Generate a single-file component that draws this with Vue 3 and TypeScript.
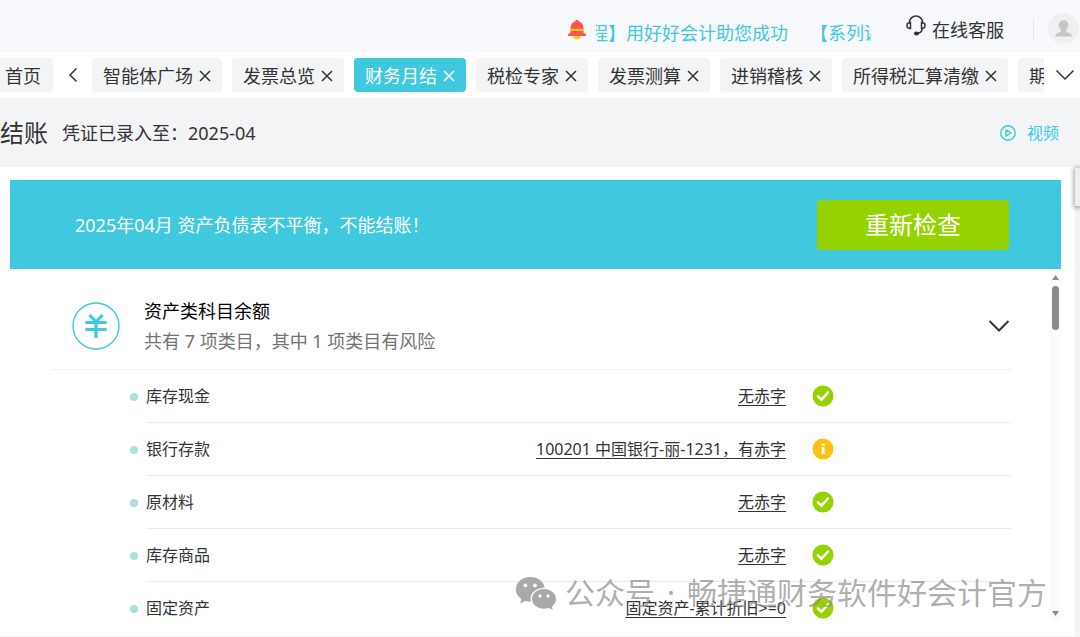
<script setup lang="ts">
import { ref } from 'vue'

interface Tab { name: string }
interface CheckItem { name: string; result: string; ok: boolean }

const tabs: Tab[] = [
  { name: '智能体广场' },
  { name: '发票总览' },
  { name: '财务月结' },
  { name: '税检专家' },
  { name: '发票测算' },
  { name: '进销稽核' },
  { name: '所得税汇算清缴' },
  { name: '期末结转' },
]
const active = ref('财务月结')

const items: CheckItem[] = [
  { name: '库存现金', result: '无赤字', ok: true },
  { name: '银行存款', result: '100201 中国银行-丽-1231，有赤字', ok: false },
  { name: '原材料', result: '无赤字', ok: true },
  { name: '库存商品', result: '无赤字', ok: true },
  { name: '固定资产', result: '固定资产-累计折旧>=0', ok: true },
]
</script>

<template>
  <div class="page">
    <header class="topbar">
      <svg class="bell" viewBox="0 0 20 22" aria-hidden="true">
        <path d="M6.5 17h7a3.5 3.5 0 0 1-7 0z" fill="#ffcc0c" />
        <path d="M10 1c1.1 0 1.7.6 1.9 1.5C15 3.3 16.5 6 16.5 9v4.5l2.500 2c.5.5.3 1.500-.6 1.500H1.600C.7 17 .5 16 1 15.500l2.500-2V9c0-3 1.500-5.700 4.600-6.500C8.300 1.600 8.900 1 10 1z" fill="#ff544f" />
        <path d="M3.5 9.8h13V12h-13z" fill="#ffcc0c" />
      </svg>
      <div class="ticker">
        <a href="#">程】用好好会计助您成功</a>
        <a href="#">【系列课程】</a>
      </div>
      <a href="#" class="service">
        <svg viewBox="0 0 20 21" aria-hidden="true" fill="none" stroke="#333" stroke-width="1.5" stroke-linecap="round">
          <path d="M3.5 8V7.5a6.500 6.500 0 0 1 13 0V8" />
          <path d="M4.5 7.5v6c-2.200 0-3.500-1.100-3.500-3s1.300-3 3.500-3zM15.500 7.500v6c2.200 0 3.500-1.100 3.500-3s-1.300-3-3.500-3z" />
          <path d="M16 13.5c0 2.500-1.300 4.300-4 4.700" />
          <ellipse cx="10.5" cy="18.5" rx="1.8" ry="1.2" fill="#333" />
        </svg>
        <span>在线客服</span>
      </a>
      <span class="split"></span>
      <button class="avatar" aria-label="用户">
        <svg viewBox="0 0 32 32" aria-hidden="true">
          <circle cx="16" cy="16" r="16" fill="#f0f0f0" />
          <path d="M16 7.5c3 0 5 2.100 5 5 0 2-.9 3.800-2.300 4.800v1.400c0 .6.400 1 1 1.200 3.200.9 4.800 1.800 4.800 4.300H7.500c0-2.500 1.600-3.400 4.800-4.300.6-.2 1-.6 1-1.200v-1.400C11.900 16.300 11 14.500 11 12.500c0-2.900 2-5 5-5z" fill="#c6c6c6" />
        </svg>
      </button>
    </header>

    <nav class="tabbar">
      <button class="tab home">首页</button>
      <button class="prev" aria-label="向左">
        <svg viewBox="0 0 10 16" aria-hidden="true"><path d="M8.5 1.500L2 8l6.500 6.500" /></svg>
      </button>
      <div class="tabs">
        <button v-for="t in tabs" :key="t.name" class="tab" :class="{ on: t.name === active }" @click="active = t.name">
          <span>{{ t.name }}</span>
          <svg viewBox="0 0 12 12" aria-hidden="true"><path d="M1 1l10 10M11 1L1 11" /></svg>
        </button>
      </div>
      <button class="more" aria-label="更多">
        <svg viewBox="0 0 20 12" aria-hidden="true"><path d="M1.5 1.500L10 10l8.500-8.500" /></svg>
      </button>
    </nav>

    <section class="heading">
      <h1>结账</h1>
      <span class="until">凭证已录入至：2025-04</span>
      <a href="#" class="video">
        <svg viewBox="0 0 16 16" aria-hidden="true" fill="none" stroke="#40c8de" stroke-width="1.4" stroke-linejoin="round">
          <circle cx="8" cy="8" r="7.2" />
          <path d="M6 4.800v6.400L11 8z" />
        </svg>
        <span>视频</span>
      </a>
    </section>

    <main class="panel">
      <div class="banner">
        <p>2025年04月 资产负债表不平衡，不能结账！</p>
        <button class="recheck">重新检查</button>
      </div>
      <div class="scroller">
        <div class="content">
          <div class="group">
            <svg class="coin" viewBox="0 0 48 48" aria-hidden="true" fill="none" stroke="#40c8de">
              <circle cx="24" cy="24" r="23" stroke-width="1.4" />
              <path d="M17.5 13l6.500 7 6.500-7M13.500 20.500h21M13.500 27.500h21M24 20v16" stroke-width="3.2" />
            </svg>
            <div class="summary">
              <h2>资产类科目余额</h2>
              <p>共有 7 项类目，其中 1 项类目有风险</p>
            </div>
            <button class="fold" aria-label="收起">
              <svg viewBox="0 0 22 14" aria-hidden="true"><path d="M1.5 2L11 11.500 20.500 2" /></svg>
            </button>
          </div>
          <ul class="items">
            <li v-for="item in items" :key="item.name">
              <i class="dot"></i>
              <div class="row">
                <span>{{ item.name }}</span>
                <a href="#">{{ item.result }}</a>
                <svg v-if="item.ok" viewBox="0 0 22 22" aria-hidden="true">
                  <circle cx="11" cy="11" r="10.5" fill="#94d300" />
                  <path d="M6 11.500l3.500 3.200L16 7.500" fill="none" stroke="#fff" stroke-width="2.6" stroke-linecap="round" />
                </svg>
                <svg v-else viewBox="0 0 22 22" aria-hidden="true">
                  <circle cx="11" cy="11" r="10.5" fill="#ffc013" />
                  <path d="M9.700 5.500h2.800v2.300H9.700zM9.300 9.300h3.200V15h.5v1.300H9.300V15h.5v-4.400h-.5z" fill="#fff" />
                </svg>
              </div>
            </li>
          </ul>
        </div>
        <div class="track" aria-hidden="true">
          <svg viewBox="0 0 7 5"><path d="M3.5 0L7 5H0z" fill="#8b8b8b" /></svg>
          <i class="thumb"></i>
          <svg viewBox="0 0 7 5"><path d="M3.5 5L7 0H0z" fill="#8b8b8b" /></svg>
        </div>
      </div>
    </main>

    <div class="drawer"></div>

    <div class="watermark">
      <svg viewBox="0 0 42 34" aria-hidden="true">
        <path fill-rule="evenodd" fill="#a9a9a9" d="M15 1c8 0 14 4.700 14.600 10.800C21.500 11.600 15.500 17 15.500 23c0 1 .1 1.800.4 2.700-2 .1-3.800-.2-5.600-.7L5 27.500l1.400-4.600C2.800 20.500.8 17.300.8 13.500.8 6.500 7 1 15 1zM10.300 7.500a1.900 1.900 0 1 0 0 3.800 1.900 1.900 0 0 0 0-3.800zm9.700 0a1.900 1.900 0 1 0 0 3.800 1.900 1.900 0 0 0 0-3.800z" />
        <path fill-rule="evenodd" fill="#a9a9a9" d="M29 13c6.700 0 12 4.400 12 10 0 3-1.600 5.700-4.200 7.500l1.100 3.300-4.200-1.900c-1.500.5-3 .8-4.700.8-6.700 0-12-4.200-12-9.700s5.300-10 12-10zM25 18.300a1.600 1.600 0 1 0 0 3.200 1.600 1.600 0 0 0 0-3.200zm8 0a1.600 1.600 0 1 0 0 3.200 1.600 1.600 0 0 0 0-3.200z" />
      </svg>
      <span>公众号</span>
      <span class="mid">·</span>
      <span>畅捷通财务软件好会计官方</span>
    </div>
  </div>
</template>

<style>
html,
body {
  height: 100%;
  overflow: hidden;
}
#app {
  height: 100%;
}
</style>

<style scoped>
.page {
  position: relative;
  min-height: 100%;
  background: #f3f4f6;
  color: #333;
  font: 18px/24px "Noto Sans", "Noto Sans CJK SC", sans-serif;
}
.page * {
  box-sizing: border-box;
}
button {
  font: inherit;
  color: inherit;
  border: 0;
  padding: 0;
  background: none;
  cursor: pointer;
}
a {
  color: inherit;
  text-decoration: none;
}
h1,
h2,
p,
ul {
  margin: 0;
  padding: 0;
  font-weight: 400;
}
svg {
  display: block;
  flex: none;
}

.topbar {
  display: flex;
  justify-content: flex-end;
  align-items: center;
  height: 52px;
  padding: 4px 1px 0 0;
  background: #f8f9fd;
}
.bell {
  width: 20px;
  height: 22px;
  margin: 4px 9px 0 0;
}
.ticker {
  display: flex;
  gap: 22px;
  width: 275px;
  padding-top: 10px;
  overflow: hidden;
  white-space: nowrap;
  color: #40c8de;
}
.ticker a:first-child {
  margin-left: -6px;
}
.service {
  display: flex;
  align-items: center;
  gap: 6px;
  margin-left: 35px;
  padding-top: 4px;
}
.service svg {
  width: 20px;
  height: 21px;
  margin-bottom: 10px;
}
.split {
  width: 1px;
  height: 21px;
  margin: 0 14px 0 29px;
  background: #e6e7ea;
}
.avatar svg {
  width: 31px;
  height: 31px;
}

.tabbar {
  display: flex;
  align-items: center;
  height: 47px;
  background: #fff;
  border-bottom: 1px solid #f0f1f3;
}
.tab {
  display: flex;
  flex: none;
  align-items: center;
  gap: 6px;
  height: 34px;
  padding: 1px 11px 0;
  border-radius: 4px;
  background: #f3f4f6;
  white-space: nowrap;
}
.tab svg {
  width: 12px;
  height: 12px;
}
.tab path,
.prev path,
.more path,
.fold path {
  fill: none;
  stroke: #333;
  stroke-width: 1.5;
}
.tab.on {
  background: #40c8de;
  color: #fff;
}
.tab.on path {
  stroke: #fff;
}
.home {
  padding: 1px 12px 0 5px;
  border-radius: 0 4px 4px 0;
}
.prev {
  display: flex;
  justify-content: center;
  width: 39px;
}
.prev svg {
  width: 10px;
  height: 16px;
}
.tabs {
  display: flex;
  flex: 1;
  gap: 10px;
  min-width: 0;
  overflow: hidden;
}
.more {
  display: flex;
  justify-content: center;
  width: 36px;
  padding-left: 6px;
}
.more svg {
  width: 20px;
  height: 12px;
}

.heading {
  display: flex;
  align-items: center;
  height: 68px;
  padding-right: 21px;
}
.heading h1 {
  font-size: 24px;
  line-height: 32px;
}
.until {
  flex: 1;
  margin-left: 14px;
}
.video {
  display: flex;
  align-items: center;
  gap: 11px;
  font-size: 16px;
  color: #40c8de;
}
.video svg {
  width: 16px;
  height: 16px;
}

.panel {
  margin-right: 5px;
  padding: 13px 14px 14px 10px;
  background: #fff;
}
.banner {
  display: flex;
  justify-content: space-between;
  align-items: center;
  height: 89px;
  padding: 0 52px 0 65px;
  background: #40c8de;
  color: #fff;
}
.recheck {
  width: 192px;
  height: 50px;
  border-radius: 4px;
  background: #94d300;
  color: #fff;
  font-size: 24px;
  line-height: 32px;
}
.scroller {
  display: flex;
  height: 353px;
}
.content {
  flex: 1;
  padding: 0 39px 0 41px;
}
.group {
  display: flex;
  align-items: center;
  height: 101px;
  padding: 13px 0 0 21px;
  border-bottom: 1px solid #f0f0f0;
}
.coin {
  width: 48px;
  height: 48px;
}
.summary {
  flex: 1;
  margin-left: 24px;
}
.summary h2 {
  font-size: 18px;
  line-height: 30px;
  color: #000;
}
.summary p {
  line-height: 30px;
  color: #737373;
}
.fold svg {
  width: 22px;
  height: 14px;
  margin-right: 1px;
}
.fold path {
  stroke-width: 2;
}
.items {
  list-style: none;
  padding-left: 79px;
  font-size: 16px;
}
.items li {
  display: flex;
  align-items: center;
}
.dot {
  width: 8px;
  height: 8px;
  margin-right: 8px;
  border-radius: 50%;
  background: #b0dbe0;
}
.row {
  display: flex;
  flex: 1;
  align-items: center;
  height: 53px;
  padding-right: 177px;
  border-bottom: 1px solid #ebebeb;
}
.items li:last-child .row {
  border-bottom-color: transparent;
}
.row a {
  margin-left: auto;
  text-decoration: underline;
  text-underline-offset: 3px;
  text-decoration-thickness: 1px;
}
.row svg {
  width: 22px;
  height: 22px;
  margin-left: 26px;
}
.track {
  display: flex;
  flex-direction: column;
  align-items: center;
  width: 11px;
  padding: 6px 0;
  background: #fbfbfb;
}
.track svg {
  width: 7px;
  height: 5px;
}
.thumb {
  width: 7px;
  height: 44px;
  margin: 6px 0 auto;
  border-radius: 4px;
  background: #8b8b8b;
}

.drawer {
  position: absolute;
  top: 168px;
  right: 0;
  width: 5px;
  height: 38px;
  background: #efefef;
  box-shadow: 0 1px 5px 1px rgba(0, 0, 0, 0.4);
}
.watermark {
  position: absolute;
  right: 33px;
  bottom: 24px;
  display: flex;
  align-items: center;
  font: 30px/40px "Noto Sans", "Noto Sans CJK SC", sans-serif;
  color: rgba(140, 140, 140, 0.7);
  white-space: nowrap;
  pointer-events: none;
}
.watermark svg {
  width: 42px;
  height: 34px;
  margin-right: 8px;
}
.mid {
  width: 32px;
  text-align: center;
}
</style>
